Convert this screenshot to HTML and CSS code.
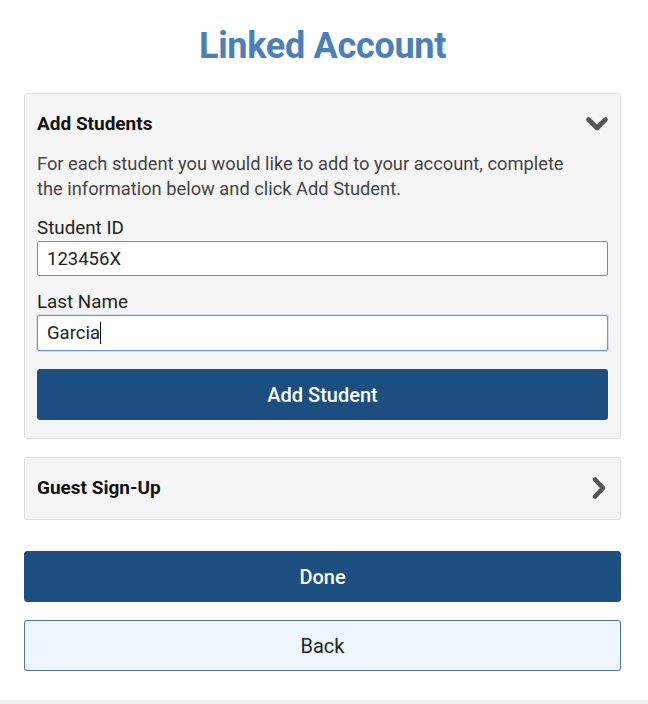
FILE: index.html
```html
<!DOCTYPE html>
<html lang="en">
<head>
<meta charset="utf-8">
<title>Linked Account</title>
<link rel="stylesheet" href="styles.css">
</head>
<body>
<main class="page">
  <h1 class="title">Linked Account</h1>

  <section class="panel">
    <div class="panel-head">
      <h2 class="panel-title">Add Students</h2>
      <svg class="chev-down" width="24" height="16" viewBox="0 0 24 16" aria-hidden="true">
        <path d="M3.5 3.5 L12 12 L20.5 3.5" fill="none" stroke="#555" stroke-width="4.6" stroke-linecap="round" stroke-linejoin="round"/>
      </svg>
    </div>
    <p class="intro">For each student you would like to add to your account, complete the information below and click Add Student.</p>
    <label class="label" for="sid">Student ID</label>
    <input class="field" id="sid" type="text" value="123456X">
    <label class="label" for="lname">Last Name</label>
    <div class="field-wrap">
      <input class="field focused" id="lname" type="text" value="Garcia">
      <span class="caret-mirror" aria-hidden="true">Garcia<span class="caret"></span></span>
    </div>
    <button class="btn btn-primary add-btn" type="button">Add Student</button>
  </section>

  <section class="panel panel-collapsed">
    <div class="panel-head">
      <h2 class="panel-title">Guest Sign-Up</h2>
      <svg class="chev-right" width="18" height="24" viewBox="0 0 18 24" aria-hidden="true">
        <path d="M5 3.5 L13 12 L5 20.5" fill="none" stroke="#555" stroke-width="4.6" stroke-linecap="round" stroke-linejoin="round"/>
      </svg>
    </div>
  </section>

  <div class="actions">
    <button class="btn btn-primary" type="button">Done</button>
    <button class="btn btn-secondary" type="button">Back</button>
  </div>
</main>
<footer class="footer"></footer>
</body>
</html>
```

FILE: styles.css
```css
* { box-sizing: border-box; }

html, body {
  margin: 0;
  padding: 0;
  background: #ffffff;
  font-family: Roboto, "Liberation Sans", Arial, sans-serif;
  color: #222;
}

.page {
  padding: 26px 27px 0 24px;
  display: flex;
  flex-direction: column;
}

.title {
  margin: 0 0 27px 0;
  text-align: center;
  font-size: 36px;
  line-height: 40px;
  font-weight: 700;
  color: #4a80b7;
  letter-spacing: -0.3px;
}

.panel {
  background: #f5f5f5;
  border: 1px solid #dedede;
  border-radius: 3px;
  padding: 18px 12px 18px 12px;
  display: flex;
  flex-direction: column;
}

.panel-collapsed {
  margin-top: 18px;
  padding: 18px 12px 19px 12px;
}

.panel-head {
  display: flex;
  align-items: center;
  justify-content: space-between;
  height: 24px;
}

.panel-title {
  margin: 0;
  font-size: 19px;
  line-height: 24px;
  font-weight: 700;
  color: #111;
}

.chev-down { margin-right: -1px; }

.intro {
  margin: 15px 0 15px 0;
  padding-right: 26px;
  font-size: 18.3px;
  line-height: 25px;
  color: #444;
}

.label {
  display: block;
  font-size: 18.8px;
  line-height: 24px;
  color: #222;
  margin-bottom: 1px;
}

.field {
  display: block;
  width: 100%;
  height: 35px;
  border: 1px solid #8a8a8a;
  border-radius: 2px;
  background: #fff;
  padding: 0 9px;
  font-family: inherit;
  font-size: 18.5px;
  color: #222;
  outline: none;
  margin: 0 0 14px 0;
}

.field-wrap {
  position: relative;
  margin-bottom: 18px;
}

.field.focused {
  height: 36px;
  border: 1px solid #6b93d6;
  box-shadow: 0 0 0 1px rgba(107, 147, 214, 0.25);
  margin: 0;
}

.caret-mirror {
  position: absolute;
  left: 10px;
  top: 7px;
  font-size: 18.5px;
  line-height: 22px;
  color: transparent;
  pointer-events: none;
  white-space: pre;
}

.caret {
  display: inline-block;
  width: 1px;
  height: 22px;
  background: #111;
  vertical-align: top;
}

.btn {
  display: block;
  width: 100%;
  height: 51px;
  border-radius: 3px;
  font-family: inherit;
  font-size: 20px;
  font-weight: 500;
  cursor: pointer;
}

.btn-primary {
  background: #1c4f7f;
  color: #fff;
  border: 1px solid #1c4f7f;
}

.btn-secondary {
  background: #edf5fd;
  color: #222;
  border: 1px solid #4f7699;
  font-weight: 400;
}

.actions {
  margin-top: 31px;
  display: flex;
  flex-direction: column;
  gap: 18px;
}

.footer {
  margin-top: 29px;
  height: 4px;
  background: #f2f2f2;
}
```
